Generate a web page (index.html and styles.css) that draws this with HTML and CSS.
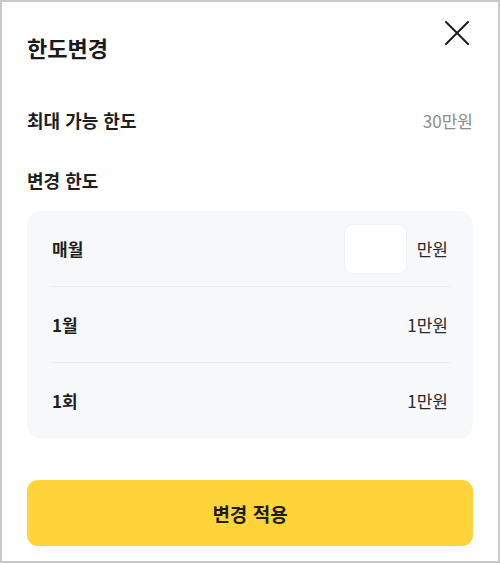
FILE: index.html
```html
<!DOCTYPE html>
<html lang="ko">
<head>
<meta charset="utf-8">
<title>한도변경</title>
<link rel="stylesheet" href="styles.css">
</head>
<body>
<div class="sheet">
  <header class="sheet-header">
    <h1 class="sheet-title">한도변경</h1>
    <button class="close-btn" type="button" aria-label="닫기">
      <svg width="24" height="24" viewBox="0 0 24 24" fill="none" stroke="#1e1e1e" stroke-width="2" stroke-linecap="round">
        <path d="M1 1 L23 23 M23 1 L1 23"/>
      </svg>
    </button>
  </header>

  <div class="info-row">
    <span class="info-label">최대 가능 한도</span>
    <span class="info-value">30만원</span>
  </div>

  <div class="section-title">변경 한도</div>

  <div class="limit-box">
    <div class="limit-row">
      <span class="limit-label">매월</span>
      <span class="limit-input-wrap">
        <input class="limit-input" type="text" value="">
        <span class="limit-unit">만원</span>
      </span>
    </div>
    <div class="limit-row">
      <span class="limit-label">1월</span>
      <span class="limit-value">1만원</span>
    </div>
    <div class="limit-row">
      <span class="limit-label">1회</span>
      <span class="limit-value">1만원</span>
    </div>
  </div>

  <button class="apply-btn" type="button">변경 적용</button>
</div>
</body>
</html>
```

FILE: styles.css
```css
html, body {
  margin: 0;
  padding: 0;
  background: #ffffff;
}

body {
  font-family: "Noto Sans CJK KR", "Noto Sans", sans-serif;
  color: #1e1e1e;
}

.sheet {
  box-sizing: border-box;
  width: 500px;
  height: 563px;
  border: 2px solid #c9c9c9;
  padding: 0 25px;
  display: flex;
  flex-direction: column;
}

.sheet-header {
  display: flex;
  justify-content: space-between;
  align-items: flex-start;
  height: 60px;
}

.sheet-title {
  margin: 30px 0 0 0;
  font-size: 22px;
  line-height: 30px;
  font-weight: 700;
  color: #1a1a1a;
}

.close-btn {
  margin-top: 15px;
  width: 32px;
  height: 32px;
  padding: 0;
  border: none;
  background: transparent;
  display: flex;
  align-items: center;
  justify-content: center;
}

.info-row {
  margin-top: 45px;
  height: 26px;
  display: flex;
  justify-content: space-between;
  align-items: center;
}

.info-label {
  font-size: 18px;
  font-weight: 700;
  color: #1e1e1e;
}

.info-value {
  font-size: 17px;
  color: #8c8c8c;
}

.section-title {
  margin-top: 34px;
  height: 26px;
  line-height: 26px;
  font-size: 18px;
  font-weight: 700;
  color: #1e1e1e;
}

.limit-box {
  margin-top: 18px;
  background: #f7f8fa;
  border-radius: 14px;
  padding: 0 23px;
}

.limit-row {
  height: 75px;
  display: flex;
  justify-content: space-between;
  align-items: center;
  padding: 0 2px;
}

.limit-row + .limit-row {
  border-top: 1px solid #eceef1;
}

.limit-label {
  font-size: 17px;
  font-weight: 700;
  color: #1e1e1e;
}

.limit-input-wrap {
  display: flex;
  align-items: center;
  gap: 10px;
}

.limit-input {
  box-sizing: border-box;
  width: 63px;
  height: 50px;
  border: 1px solid #f1f2f4;
  border-radius: 9px;
  background: #ffffff;
  outline: none;
  font-family: inherit;
  font-size: 17px;
  text-align: right;
  padding: 0 8px;
}

.limit-unit,
.limit-value {
  font-size: 17px;
  color: #2a2a2a;
}

.apply-btn {
  margin-top: 42px;
  height: 66px;
  width: 100%;
  border: none;
  border-radius: 11px;
  background: #ffd43a;
  font-family: inherit;
  font-size: 19px;
  font-weight: 700;
  color: #1e1e1e;
}
```
